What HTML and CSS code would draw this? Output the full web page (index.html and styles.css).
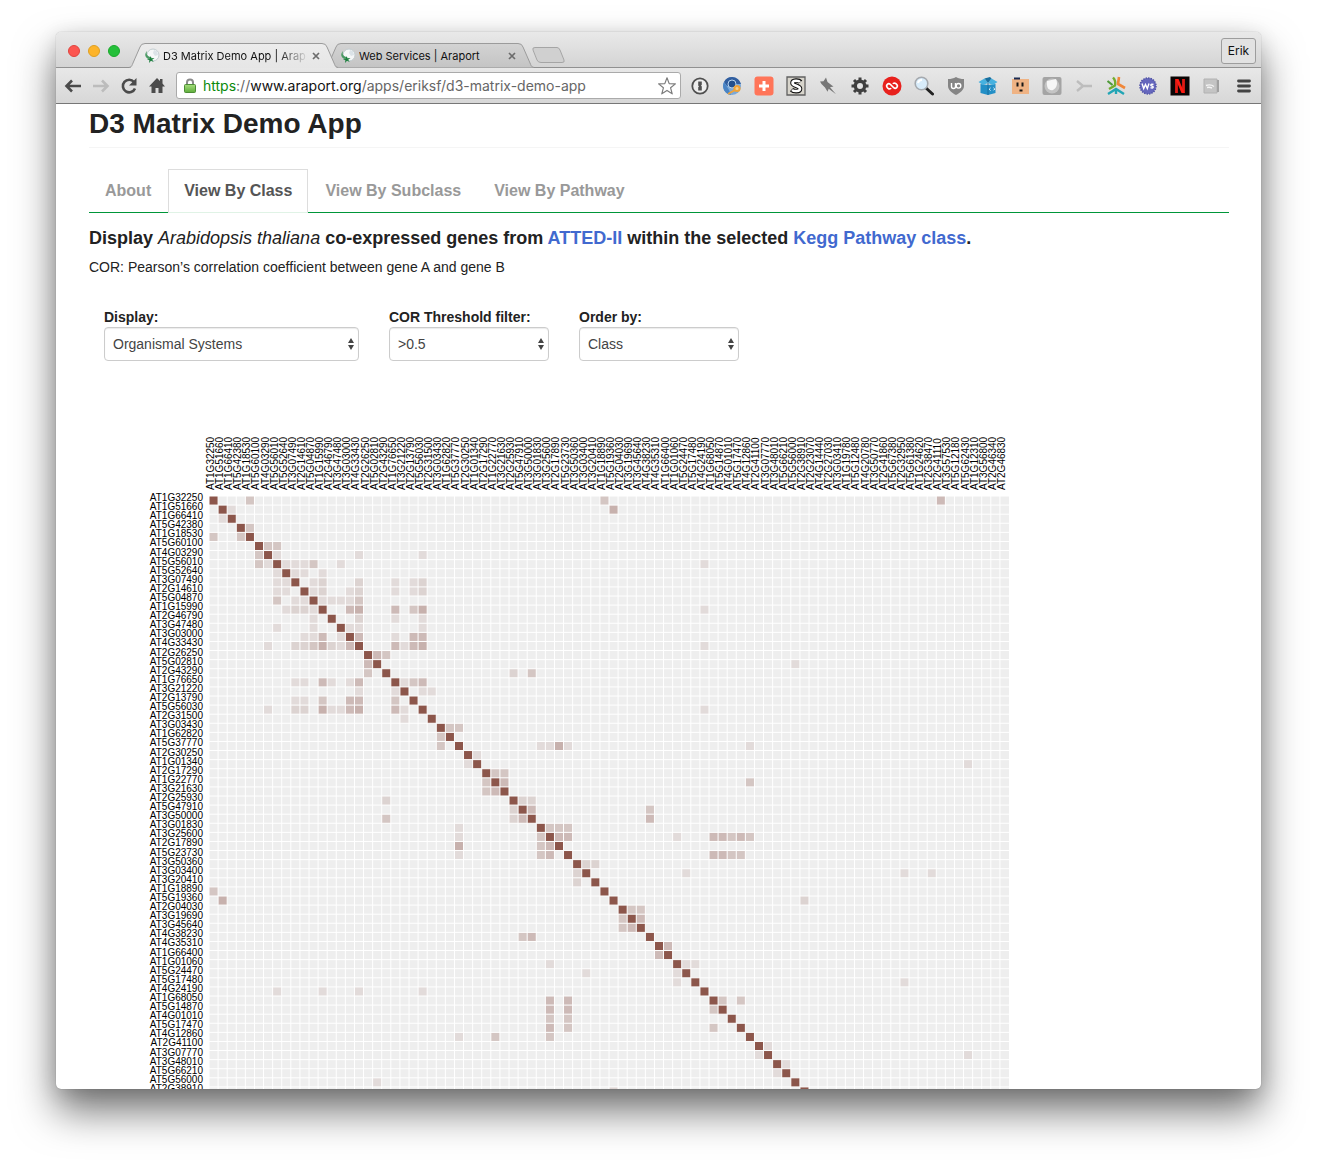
FILE: index.html
```html
<!DOCTYPE html>
<html lang="en">
<head>
<meta charset="utf-8">
<title>D3 Matrix Demo App | Araport</title>
<link rel="stylesheet" href="styles.css">
</head>
<body>
<svg class="defs" width="0" height="0" aria-hidden="true">
  <defs>
    <linearGradient id="tab-front" x2="0" y2="1"><stop stop-color="#ececec"/><stop offset="1" stop-color="#e6e6e6"/></linearGradient>
    <linearGradient id="tab-back" x2="0" y2="1"><stop stop-color="#d3d3d3"/><stop offset="1" stop-color="#c4c4c4"/></linearGradient>
    <linearGradient id="lock-fill" x2="0" y2="1"><stop stop-color="#a5dc7c"/><stop offset="1" stop-color="#5fae3c"/></linearGradient>
    <symbol id="leaf" viewBox="0 0 16 16">
      <circle cx="9" cy="7" r="6" fill="#f5f7f8" stroke="#c3cdd0"/>
      <path d="M10 2l3 1 1 4-3 1-2-3z" fill="#dbe3e8"/>
      <path d="M3 3C0 6 1 10 5 11l3-1-2-1C3 8 2 6 3 3z" fill="#4b9a64"/>
      <path d="M6.500 8l.8 2.300 3.200-.3-2.300 1.700 1.500 2.300-2.700-1.200-2 2.200.4-2.800-2.600-1.200 2.900-.3z" fill="#1c7f3d"/>
    </symbol>
    <symbol id="cross" viewBox="0 0 8 8"><path d="M1 1l6 6M7 1L1 7" stroke="#6c6c6c" stroke-width="1.7"/></symbol>
  </defs>
</svg>
<div class="window">
  <header class="tabstrip">
    <div class="lights"><i class="light red"></i><i class="light yellow"></i><i class="light green"></i></div>
    <div class="tab front">
      <svg class="tab-shape" viewBox="0 0 209 25" preserveAspectRatio="none" aria-hidden="true"><path d="M0 25C3 25 3 22 4 20L11 4Q12 .5 16 .5H193Q197 .5 198 4L205 20C206 22 206 25 209 25Z" fill="url(#tab-front)"/><path d="M0 24.500C3 24 3 22 4 20L11 4Q12 .5 16 .5H193Q197 .5 198 4L205 20C206 22 206 24 209 24.500" fill="none" stroke="#9b9b9b"/></svg>
      <svg class="favicon" aria-hidden="true"><use href="#leaf"/></svg>
      <span class="tab-title faded">D3 Matrix Demo App | Araport</span>
      <button class="close" aria-label="Close tab"><svg width="8" height="8"><use href="#cross"/></svg></button>
    </div>
    <div class="tab">
      <svg class="tab-shape" viewBox="0 0 209 25" preserveAspectRatio="none" aria-hidden="true"><path d="M0 24.500C3 24 3 22 4 20L11 4Q12 .5 16 .5H193Q197 .5 198 4L205 20C206 22 206 24 209 24.500" fill="url(#tab-back)" stroke="#9b9b9b"/></svg>
      <svg class="favicon" aria-hidden="true"><use href="#leaf"/></svg>
      <span class="tab-title">Web Services | Araport</span>
      <button class="close" aria-label="Close tab"><svg width="8" height="8"><use href="#cross"/></svg></button>
    </div>
    <button class="new-tab" aria-label="New tab"><svg width="34" height="17" viewBox="0 0 34 17"><path d="M3 .5H25Q27 .5 28 3L32 13Q33 15.500 30 15.500H9Q6 15.500 5 13L1 3Q0 .5 3 .5Z" fill="#d0d0d0" stroke="#a5a5a5"/></svg></button>
    <button class="profile">Erik</button>
  </header>

  <div class="toolbar">
    <div class="nav">
      <button class="icon" aria-label="Back"><svg viewBox="0 0 20 20"><path d="M18 10H4M9 4.500L3.500 10 9 15.500" fill="none" stroke="#4b4b4b" stroke-width="2.600"/></svg></button>
      <button class="icon" aria-label="Forward"><svg viewBox="0 0 20 20"><path d="M2 10H16M11 4.500L16.500 10 11 15.500" fill="none" stroke="#bcbcbc" stroke-width="2.600"/></svg></button>
      <button class="icon" aria-label="Reload"><svg viewBox="0 0 20 20"><path d="M15 6A6.300 6.300 0 1 0 16 12.500" fill="none" stroke="#4b4b4b" stroke-width="2.600"/><path d="M17.500 2V9.500H10z" fill="#4b4b4b"/></svg></button>
      <button class="icon" aria-label="Home"><svg viewBox="0 0 20 20"><path d="M10 2L2 10.500h2.500V17H8.500V12h3v5h4v-6.500H18L15.500 7.500V3H13v2z" fill="#4b4b4b"/></svg></button>
    </div>
    <label class="address">
      <svg class="lock" viewBox="0 0 14 16" aria-hidden="true"><path d="M4 8V4.500a3 3 0 0 1 6 0V8" fill="none" stroke="#8b8b8b" stroke-width="2"/><rect x="1.500" y="6.500" width="11" height="8" rx="1" fill="url(#lock-fill)" stroke="#4c8d35"/></svg>
      <span class="url"><span class="scheme">https</span>://<span class="host">www.araport.org</span>/apps/eriksf/d3-matrix-demo-app</span>
      <svg class="star" viewBox="0 0 20 20" aria-hidden="true"><path d="M10 1.800L12.200 7.600 18.400 7.900 13.600 11.800 15.200 17.800 10 14.400 4.800 17.800 6.400 11.800 1.600 7.900 7.800 7.600Z" fill="#fff" stroke="#7d7d7d" stroke-width="1.200" stroke-linejoin="round"/></svg>
    </label>
    <div class="extensions">
      <button class="icon" aria-label="1Password"><svg viewBox="0 0 20 20"><circle cx="10" cy="10" r="7.700" fill="#eee" stroke="#505050" stroke-width="1.800"/><path d="M8.200 5.500h3.600v3.200l-.8.900.8.900v4H8.200v-3.200l.8-.9-.8-.9z" fill="#505050"/></svg></button>
      <button class="icon" aria-label="Chromium key"><svg viewBox="0 0 20 20"><circle cx="10" cy="10" r="9" fill="#7aa9da"/><path d="M10 1a9 9 0 0 1 9 7H10L5 10 2 6A9 9 0 0 1 10 1z" fill="#315e9f"/><path d="M2 6L7 14 9 19A9 9 0 0 1 2 6z" fill="#4a84c4"/><circle cx="10" cy="8" r="4" fill="#23508d" stroke="#b8d5ef"/><circle cx="15" cy="12.500" r="2.600" fill="#f6cf8c" stroke="#efa33a" stroke-width="2"/><path d="M13 14L6 18" stroke="#efa33a" stroke-width="2"/></svg></button>
      <button class="icon" aria-label="Add"><svg viewBox="0 0 20 20"><rect x=".5" y=".5" width="19" height="19" rx="3" fill="#ff7559"/><path d="M10 5v10M5 10h10" stroke="#fff" stroke-width="3"/></svg></button>
      <button class="icon" aria-label="Stylish"><svg viewBox="0 0 20 20"><path d="M1 1h18v18H1z" fill="#d8d5cc" stroke="#606060" stroke-width="1.300"/><path d="M14.500 6C13 4 6.500 3.500 6.500 7c0 3 7.500 2.500 7.500 5.700 0 3.300-6.500 3-8.500 1" fill="none" stroke="#111" stroke-width="4.600"/><path d="M14 6C13 4.500 6.500 4 6.500 7c0 3 7.500 2.500 7.500 5.700 0 3-6 2.800-8 1.200" fill="none" stroke="#fff" stroke-width="2.600"/></svg></button>
      <button class="icon" aria-label="Pin"><svg viewBox="0 0 20 20"><path d="M8 1.500L9.500 6 14 9.500l1.500 1-3.500.8 6 7-7.300-5.600-1.200 3L7 11.500 3.500 8 2 5.500l3.500-.2z" fill="#777"/></svg></button>
      <button class="icon" aria-label="Settings"><svg viewBox="0 0 20 20"><path d="M10 1.500V18.500M1.500 10h17M4 4l12 12M16 4L4 16" stroke="#3f3f3f" stroke-width="3"/><circle cx="10" cy="10" r="4.700" fill="#e4e4e4" stroke="#3f3f3f" stroke-width="3.400"/></svg></button>
      <button class="icon" aria-label="Authy"><svg viewBox="0 0 20 20"><circle cx="10" cy="10" r="9.500" fill="#e8211d"/><path d="M9.500 7.500L12 10a1.700 1.700 0 0 1-2.500 2.300L7.800 10.700M10.500 12.500L8 10a1.700 1.700 0 0 1 2.500-2.300l1.700 1.600" fill="none" stroke="#e8211d"/><path d="M11.300 11.300L8.300 8.300a2.200 2.200 0 0 0-3.100 3.100l.9.900a2.200 2.200 0 0 0 2.600.3M8.700 8.700l3 3a2.200 2.200 0 0 0 3.100-3.100l-.9-.9a2.200 2.200 0 0 0-2.600-.3" fill="none" stroke="#fff" stroke-width="1.600" stroke-linecap="round"/></svg></button>
      <button class="icon" aria-label="Search"><svg viewBox="0 0 20 20"><path d="M12 12l6.500 6" stroke="#222" stroke-width="3" stroke-linecap="round"/><circle cx="7.500" cy="7.500" r="6.300" fill="#d8ecfa" stroke="#a5a9ae" stroke-width="1.600"/><path d="M4 7a4 4 0 0 1 4-3" fill="none" stroke="#fff" stroke-width="2"/></svg></button>
      <button class="icon" aria-label="uBlock Origin"><svg viewBox="0 0 20 20"><path d="M10 1c2.500 1.500 5 2 8 2v7c0 4-4 7-8 9-4-2-8-5-8-9V3c3 0 5.500-.5 8-2z" fill="#858585"/><path d="M5.500 7v3.500q0 2 2 2t2-2V7" fill="none" stroke="#fff" stroke-width="1.400"/><circle cx="12.500" cy="9.800" r="2.300" fill="none" stroke="#fff" stroke-width="1.400"/></svg></button>
      <button class="icon" aria-label="Code box"><svg viewBox="0 0 20 20"><path d="M2.500 8l7.500 1 7.500-1v9l-7.500 2-7.500-2z" fill="#238fc6"/><path d="M.5 6l6-3.500L10 7 5 9zM19.500 6l-6-3.500L10 7l5 2z" fill="#46b1df"/><path d="M6.500 2.500L12 1l1.500 1.500L10 7z" fill="#176f9f"/><path d="M10 7v12" stroke="#1a6f9e"/><path d="M12.500 12l-1.300 1.300 1.300 1.200M15.500 11.800l1.300 1.200-1.300 1.300" fill="none" stroke="#fff"/></svg></button>
      <button class="icon" aria-label="Face"><svg viewBox="0 0 20 20"><path d="M2 3h17v15H2z" fill="#efb384"/><path d="M4 1.500h6v2H4z" fill="#1b2a50"/><path d="M6.500 6.500h2v4h-2zM11.500 6.500h2v4h-2zM9.500 13.500h3v2h-3z" fill="#171717"/></svg></button>
      <button class="icon" aria-label="Egg"><svg viewBox="0 0 20 20"><rect x=".5" y="1" width="19" height="18" rx="2" fill="#a4a4a4"/><circle cx="10" cy="10" r="7.500" fill="#c4c4c4"/><path d="M5 5l9-2c2 4 1 9-3 11-4 1-7-2-6-9z" fill="#f6f6f6"/></svg></button>
      <button class="icon" aria-label="Branch"><svg viewBox="0 0 20 20"><path d="M3 5l6 5h9M9 10l-6 5" fill="none" stroke="#bdbdbd" stroke-width="2.400"/></svg></button>
      <button class="icon" aria-label="Star branches"><svg viewBox="0 0 20 20"><path d="M7 1.500q3 3 2 8L3 13" fill="none" stroke="#73ad2e" stroke-width="2.400"/><path d="M1.500 5l5 4" stroke="#4f9a3a" stroke-width="2.200"/><path d="M13 1l-1 7 7 4" fill="none" stroke="#f0873a" stroke-width="2.600"/><path d="M2 18l8-5 8 5M10 13v5" fill="none" stroke="#22a5b5" stroke-width="2.400"/></svg></button>
      <button class="icon" aria-label="WebStorm"><svg viewBox="0 0 20 20"><circle cx="10" cy="10" r="8" fill="#6567bd" stroke="#5053a7" stroke-width="1.500" stroke-dasharray="1.500 1"/><path d="M4 7.500l1.700 5 1.800-4 1.800 4 1.700-5M15.500 8.500c-3-1-3.500 1.200-1.500 1.600s1.500 2.600-1.500 1.600" fill="none" stroke="#fff" stroke-width="1.400"/></svg></button>
      <button class="icon" aria-label="Netflix"><svg viewBox="0 0 20 20"><path d="M.5.5h19v19H.5z" fill="#0b0505"/><path d="M6.500 17V3M13.500 17V3" stroke="#e01a14" stroke-width="2.800"/><path d="M5.500 3h3l6 14h-3z" fill="#ff1b12"/></svg></button>
      <button class="icon" aria-label="Cast card"><svg viewBox="0 0 20 20"><path d="M2 3h13v14H2z" fill="#c4c4c4" stroke="#b2b2b2"/><path d="M15 4h2v12h-2z" fill="#a0a0a0"/><path d="M4 9.500c3-1 6-.5 8 1M5 11.500c2-.5 4 0 5 .5" fill="none" stroke="#f4f4f4" stroke-width="1.400"/></svg></button>
      <button class="icon" aria-label="Menu"><svg viewBox="0 0 20 20"><path d="M4.500 5h11M4.500 10h11M4.500 15h11" stroke="#434343" stroke-width="2.800" stroke-linecap="round"/></svg></button>
    </div>
  </div>

  <main class="page">
    <h1>D3 Matrix Demo App</h1>
    <nav class="views">
      <a href="#about">About</a>
      <a href="#class" class="active">View By Class</a>
      <a href="#subclass">View By Subclass</a>
      <a href="#pathway">View By Pathway</a>
    </nav>
    <h2>Display <em>Arabidopsis thaliana</em> co-expressed genes from <a href="#atted">ATTED-II</a> within the selected <a href="#kegg">Kegg Pathway class</a>.</h2>
    <p class="note">COR: Pearson’s correlation coefficient between gene A and gene B</p>
    <form class="filters">
      <div class="field wide">
        <label for="display">Display:</label>
        <div class="select"><select id="display"><option>Organismal Systems</option></select><svg viewBox="0 0 6 12" aria-hidden="true"><path d="M3 0l3 5H0zM3 12L0 7h6z" fill="#444"/></svg></div>
      </div>
      <div class="field">
        <label for="threshold">COR Threshold filter:</label>
        <div class="select"><select id="threshold"><option>&gt;0.5</option></select><svg viewBox="0 0 6 12" aria-hidden="true"><path d="M3 0l3 5H0zM3 12L0 7h6z" fill="#444"/></svg></div>
      </div>
      <div class="field">
        <label for="order">Order by:</label>
        <div class="select"><select id="order"><option>Class</option></select><svg viewBox="0 0 6 12" aria-hidden="true"><path d="M3 0l3 5H0zM3 12L0 7h6z" fill="#444"/></svg></div>
      </div>
    </form>
    <svg class="matrix" id="matrix" width="860" height="866" role="img" aria-label="Gene co-expression matrix"></svg>
  </main>
</div>
<script src="matrix.js"></script>
</body>
</html>
```
FILE: styles.css
```css
* { box-sizing: border-box; }

body {
  margin: 0;
  padding: 32px 56px 80px;
  min-height: 100vh;
  background: #fff;
  color: #222;
  font-family: "Liberation Sans", Arial, sans-serif;
  font-size: 14px;
  line-height: 20px;
  overflow: hidden;
}

button { margin: 0; padding: 0; border: 0; background: none; font: inherit; }
svg { display: block; }
.defs { position: absolute; }

.window {
  display: flex;
  flex-direction: column;
  height: calc(100vh - 112px);
  border-radius: 5px;
  overflow: hidden;
  background: #fff;
  box-shadow: 0 0 1px rgba(0, 0, 0, .4), 0 22px 40px rgba(0, 0, 0, .55), 0 4px 20px rgba(0, 0, 0, .12);
}

/* Tab strip */
.tabstrip {
  display: flex;
  align-items: flex-end;
  flex: none;
  height: 36px;
  padding: 0 5px 0 12px;
  border-bottom: 1px solid #919191;
  background: linear-gradient(#e9e9e9, #d4d4d4);
  font-family: Inter, sans-serif;
}
.lights { display: flex; gap: 8px; width: 61px; padding-bottom: 10px; }
.light { width: 12px; height: 12px; border-radius: 50%; }
.red { background: #fc5650; border: 1px solid #e0443e; }
.yellow { background: #fdb42a; border: 1px solid #de9f22; }
.green { background: #25c03a; border: 1px solid #1aa92b; }

.tab {
  position: relative;
  display: flex;
  align-items: center;
  width: 209px;
  height: 25px;
  margin-bottom: -1px;
  padding: 0 18px 0 15px;
}
.tab + .tab { margin-left: -13px; }
.front { z-index: 1; }
.tab-shape { position: absolute; inset: 0; width: 100%; height: 100%; }
.favicon { position: relative; flex: none; width: 16px; height: 16px; margin-right: 3px; }
.tab-title {
  position: relative;
  flex: 1;
  min-width: 0;
  overflow: hidden;
  color: #111;
  font-size: 11px;
  line-height: 16px;
  white-space: nowrap;
}
.faded { mask-image: linear-gradient(to right, #000 115px, transparent 146px); }
.close { position: relative; margin-left: 6px; }
.new-tab { margin: 0 auto 3px -2px; }
.profile {
  height: 26px;
  width: 35px;
  margin-bottom: 3px;
  border: 1px solid #9d9d9d;
  border-radius: 3px;
  background: #e2e2e2;
  font-size: 12px;
  color: #111;
}

/* Toolbar */
.toolbar {
  display: flex;
  align-items: center;
  gap: 9px;
  flex: none;
  height: 36px;
  padding: 0 7px;
  border-bottom: 1px solid #777;
  background: linear-gradient(#e8e8e8, #d7d7d7);
}
.nav { display: flex; gap: 8px; }
.extensions { display: flex; gap: 12px; }
.icon, .icon svg { width: 20px; height: 20px; }
.address {
  display: flex;
  align-items: center;
  flex: 1;
  height: 27px;
  padding: 0 3px 0 6px;
  border: 1px solid #aaa;
  border-radius: 3px;
  background: #fff;
}
.lock { width: 14px; height: 16px; margin-right: 6px; }
.url {
  flex: 1;
  color: #666;
  font-family: Inter, sans-serif;
  font-size: 14px;
  line-height: 20px;
  white-space: nowrap;
}
.scheme { color: #0b8a0b; }
.host { color: #111; }
.star { width: 20px; height: 20px; }

/* Page */
.page {
  flex: 1;
  min-height: 0;
  padding: 0 32px 0 33px;
  overflow: auto;
  scrollbar-width: none;
}
h1 {
  margin: 0;
  padding: 4px 0 7px;
  border-bottom: 1px solid #f5f5f5;
  font-size: 28px;
  line-height: 32px;
}
.views {
  display: flex;
  gap: 1px;
  margin-top: 21px;
  border-bottom: 1px solid #009639;
}
.views a {
  margin-bottom: -1px;
  padding: 11px 15px;
  border: 1px solid transparent;
  border-bottom: 0;
  color: #999;
  font-size: 16px;
  font-weight: bold;
  line-height: 20px;
  text-decoration: none;
}
.views .active { border: 1px solid #ddd; border-bottom-color: #e0f3e6; background: #fff; color: #555; }
h2 { margin: 15px 0 9px; font-size: 18px; line-height: 20px; }
h2 em { font-weight: normal; }
h2 a { color: #4169cf; text-decoration: none; }
.note { margin: 0; }
.filters { display: flex; gap: 30px; margin: 30px 15px 0; }
.field { width: 160px; }
.wide { width: 255px; }
.field label { display: block; font-weight: bold; }
.select { position: relative; }
.select select {
  appearance: none;
  display: block;
  width: 100%;
  height: 34px;
  padding: 0 8px;
  border: 1px solid #ccc;
  border-radius: 4px;
  background: #fff;
  box-shadow: inset 0 1px 1px rgba(0, 0, 0, .08);
  color: #444;
  font: inherit;
}
.select svg { position: absolute; top: 11px; right: 5px; width: 6px; height: 12px; }

/* Matrix */
.matrix { margin: 69px 0 0 60px; }
.background { fill: #eee; }
.cell { fill: #8c564b; }
.grid { stroke: #fff; }
.gene { fill: #000; font-size: 10px; }
```
FILE: matrix.js
```js
const genes = `AT1G32250 AT1G51660 AT1G66410 AT5G42380 AT1G18530 AT5G60100 AT4G03290 AT5G56010 AT5G52640 AT3G07490 AT2G14610
AT5G04870 AT1G15990 AT2G46790 AT3G47480 AT3G03000 AT4G33430 AT2G26250 AT5G02810 AT2G43290 AT1G76650 AT3G21220 AT2G13790
AT5G56030 AT2G31500 AT3G03430 AT1G62820 AT5G37770 AT2G30250 AT1G01340 AT2G17290 AT1G22770 AT3G21630 AT2G25930 AT5G47910
AT3G50000 AT3G01830 AT3G25600 AT2G17890 AT5G23730 AT3G50360 AT3G03400 AT3G20410 AT1G18890 AT5G19360 AT2G04030 AT3G19690
AT3G45640 AT4G38230 AT4G35310 AT1G66400 AT1G01060 AT5G24470 AT5G17480 AT4G24190 AT1G68050 AT5G14870 AT4G01010 AT5G17470
AT4G12860 AT2G41100 AT3G07770 AT3G48010 AT5G66210 AT5G56000 AT2G38910 AT2G23070 AT4G14440 AT2G27030 AT3G03410 AT1G19780
AT5G12480 AT4G20780 AT3G50770 AT2G41860 AT5G67380 AT2G32950 AT5G61380 AT1G24620 AT2G38470 AT2G41110 AT3G57530 AT5G12180
AT5G62430 AT1G12310 AT3G56800 AT2G46340 AT2G46830`.split(/\s+/);

// Upper triangle: row index -> "column:strength" pairs.
const links = {
  0: "4:3 43:3 80:4", 1: "2:1 44:5", 3: "4:3", 5: "6:3 7:3", 6: "7:1 16:1 23:1",
  7: "8:1 9:1 10:1 11:3 14:1 54:1", 8: "9:1 10:1 12:1", 9: "11:1 12:2 16:2 20:1 22:1 23:2",
  10: "11:1 12:2 15:1 16:2 20:1 22:1 23:2", 11: "12:1 13:1 14:1 15:1 16:3",
  12: "15:4 16:5 20:4 22:3 23:5 54:1", 13: "16:2 20:1 23:1", 14: "15:1 16:1 23:1",
  15: "16:4 20:1 22:4 23:4", 16: "20:4 21:1 22:4 23:5 54:1", 17: "18:4 19:3", 18: "64:1",
  19: "33:2 35:3", 20: "21:1 22:3 23:4", 21: "23:1 24:1", 23: "54:1", 25: "26:3 27:3",
  27: "36:1 37:1 38:5 39:1 59:1", 28: "29:1", 29: "83:1", 30: "31:3 32:3", 31: "32:4 59:3",
  33: "34:2 35:2", 34: "35:4 48:3", 35: "48:4", 36: "37:3 38:3 39:3",
  37: "38:4 39:4 51:1 55:4 56:4 57:3 58:4 59:3", 39: "55:4 56:4 57:3 58:3", 40: "41:2 42:2",
  41: "52:1 76:1 79:1", 44: "65:2", 45: "46:3 47:3", 46: "47:4", 49: "50:4",
  51: "52:1 53:1", 53: "76:1", 55: "56:3 58:3", 60: "61:1", 61: "83:1", 62: "63:1"
};
const opacity = [0, .12, .18, .26, .34, .4];

const left = 60, top0 = 66, size = 800;
const step = size / genes.length;
let out = `<rect class="background" x="${left}" y="${top0}" width="${size}" height="${size}"/>`;

const cell = (r, c, o) => {
  out += `<rect class="cell" x="${left + c * step}" y="${top0 + r * step}" width="${step}" height="${step}" fill-opacity="${o}"/>`;
};
genes.forEach((g, i) => cell(i, i, 1));
Object.entries(links).forEach(([r, list]) => list.split(" ").forEach(pair => {
  const [c, level] = pair.split(":").map(Number);
  cell(+r, c, opacity[level]);
  cell(c, +r, opacity[level]);
}));
genes.forEach((g, i) => {
  const x = left + i * step, y = top0 + i * step;
  out += `<path class="grid" d="M${x} ${top0}v${size}M${left} ${y}h${size}"/>`;
  out += `<text class="gene" text-anchor="end" x="${left - 6}" y="${y + 5}">${g}</text>`;
  out += `<text class="gene" transform="translate(${x + 5} ${top0 - 6}) rotate(-90)">${g}</text>`;
});
document.getElementById("matrix").innerHTML = out;
```
